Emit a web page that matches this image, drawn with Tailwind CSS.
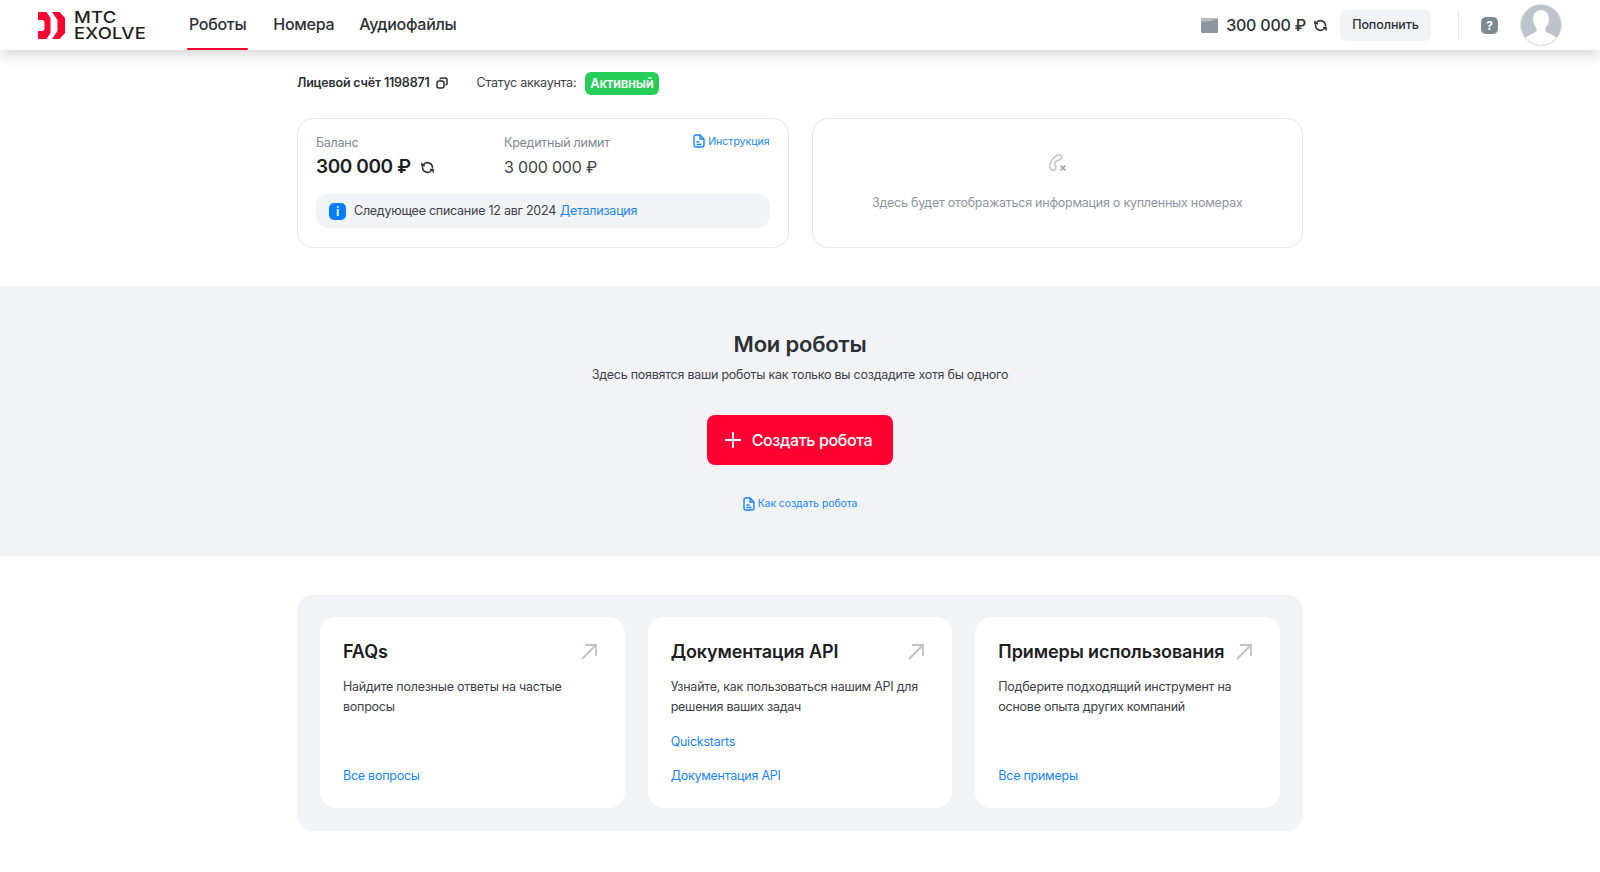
<!DOCTYPE html>
<html lang="ru">
<head>
  <meta charset="UTF-8" />
  <meta name="viewport" content="width=device-width, initial-scale=1.0" />
  <title>МТС Exolve</title>
  <script src="https://cdn.jsdelivr.net/npm/@tailwindcss/browser@4"></script>
</head>
<body class="bg-white h-[872px] overflow-hidden font-['Inter',sans-serif] text-[#1d2023]">
  <!-- header -->
  <header class="relative z-10 h-[50px] bg-white shadow-[0_3px_16px_rgba(0,0,0,0.2)] flex items-center pl-[38px] pr-[38px]">
    <div class="flex items-center w-[149px]">
      <svg width="27" height="27" viewBox="0 0 27 27" class="shrink-0"><path fill="#ff0032" d="M0 0H8.500L12.500 6V21L8.500 27H0V19H5L6.500 17V10L5 8H0z"/><path fill="#ff0032" d="M14 0H21.500L27 6V21L21.500 27H14L19.500 19V8z"/></svg>
      <div class="ml-[9px] text-[16px] leading-[16px] font-medium text-[#1d2023] tracking-[0.2px] scale-x-[1.15] origin-left">МТС<br />EXOLVE</div>
    </div>
    <nav class="flex h-full text-[16px] font-medium tracking-[-0.3px] text-[#2c3135]">
      <a class="relative flex items-center px-[2px] pb-[2px] mr-[25px]">Роботы<span class="absolute left-0 right-0 bottom-0 h-[2px] rounded bg-[#ff0032]"></span></a>
      <a class="flex items-center pb-[2px] mr-[25px]">Номера</a>
      <a class="flex items-center pb-[2px]">Аудиофайлы</a>
    </nav>
    <div class="ml-auto flex items-center">
      <svg width="17" height="15" viewBox="0 0 17 15"><rect width="17" height="15" rx="1.500" fill="#8d969f"/><path d="M0 4 Q8 4 17 0.500 V0 H0z" fill="#b5bcc3"/></svg>
      <span class="ml-[8px] text-[16px] font-medium tracking-[-0.2px] text-[#2c3135]">300 000 ₽</span>
      <svg class="ml-[7px]" width="15" height="15" viewBox="0 0 24 24" fill="none" stroke="#2c3135" stroke-width="2.400" stroke-linecap="round" stroke-linejoin="round"><path d="M20 12a8 8 0 0 0-14-5L4 9"/><path d="M4 12a8 8 0 0 0 14 5l2-2"/><path d="M3 5v4h4M21 19v-4h-4"/></svg>
      <button class="ml-[12px] w-[91px] h-[31px] rounded-md bg-[#f2f3f7] text-[12.500px] font-medium tracking-[-0.1px] text-[#2c3135]">Пополнить</button>
      <div class="ml-[27px] w-px h-[30px] bg-[#e4e6ea]"></div>
      <div class="ml-[22px] w-[17px] h-[17px] rounded-[5px] bg-[#7e8993] text-white text-[12px] font-bold leading-[17px] text-center">?</div>
      <div class="ml-[22px] w-[42px] h-[42px] rounded-full bg-[#bcc3ca] border border-[#e2e5e9] overflow-hidden">
        <svg width="40" height="40" viewBox="0 0 40 40"><path fill="#fff" d="M20 5c5 0 8 4 8 9.500 0 3.500-1.500 6.500-3.500 8.500v3c1 2 8 3.500 11 7-3.500 4-9.500 7-15.500 7S8 37.500 4.500 33c3-3.500 10-5 11-7v-3c-2-2-3.500-5-3.500-8.500C12 9 15 5 20 5z"/></svg>
      </div>
    </div>
  </header>

  <main>
    <!-- account -->
    <div class="w-[1006px] mx-auto">
      <div class="flex items-center h-[24px] mt-[21px]">
        <span class="text-[12.500px] font-semibold tracking-[-0.2px] text-[#2c3135]">Лицевой счёт 1198871</span>
        <svg class="ml-[6px]" width="12" height="12" viewBox="0 0 12 12" fill="none" stroke="#2c3135" stroke-width="1.500"><rect x="1" y="4" width="7" height="7" rx="2"/><path d="M4 2.500A1.500 1.500 0 0 1 5.500 1H9.500A1.500 1.500 0 0 1 11 2.500V6.500A1.500 1.500 0 0 1 9.500 8"/></svg>
        <span class="ml-[29px] text-[12.500px] tracking-[-0.25px] text-[#3c4247]">Статус аккаунта:</span>
        <span class="ml-[9px] h-[23px] px-[5px] rounded-md bg-[#26cd58] text-white text-[13px] font-semibold tracking-[-0.2px] leading-[23px]">Активный</span>
      </div>
      <div class="mt-[23px] grid grid-cols-2 gap-[23px]">
        <section class="relative h-[130px] rounded-[16px] border border-[#e6e8ec] px-[18px] pt-[14px]">
          <div class="flex">
            <div class="w-[188px]">
              <div class="text-[12.500px] tracking-[-0.25px] leading-[19px] text-[#7e8993]">Баланс</div>
              <div class="mt-[1px] flex items-center">
                <span class="text-[19px] tracking-[-0.4px] leading-[28px] font-semibold text-[#1d2023]">300 000 ₽</span>
                <svg class="ml-[9px]" width="15" height="15" viewBox="0 0 24 24" fill="none" stroke="#2c3135" stroke-width="2.400" stroke-linecap="round" stroke-linejoin="round"><path d="M20 12a8 8 0 0 0-14-5L4 9"/><path d="M4 12a8 8 0 0 0 14 5l2-2"/><path d="M3 5v4h4M21 19v-4h-4"/></svg>
              </div>
            </div>
            <div>
              <div class="text-[12.500px] tracking-[-0.25px] leading-[19px] text-[#7e8993]">Кредитный лимит</div>
              <div class="mt-[1px] text-[16px] tracking-[-0.2px] leading-[28px] text-[#3c4247]">3 000 000 ₽</div>
            </div>
            <a class="ml-auto flex items-start h-[19px] text-[10.500px] leading-[17px] text-[#1a85f5]">
              <svg class="mr-[3px] mt-[1px]" width="12" height="14" viewBox="0 0 12 14" fill="none" stroke="#1a85f5" stroke-width="1.400"><path d="M3 1h4l4 4v6a2 2 0 0 1-2 2H3a2 2 0 0 1-2-2V3a2 2 0 0 1 2-2z"/><path d="M7 1v4h4M3.500 8h3M3.500 10.500h5"/></svg>
              Инструкция
            </a>
          </div>
          <div class="mt-[13px] h-[34px] rounded-[12px] bg-[#f2f3f7] flex items-center pl-[13px] text-[12.500px] tracking-[-0.25px] text-[#3c4247]">
            <span class="w-[17px] h-[17px] rounded-[5px] bg-[#007cff] text-white text-[12px] font-bold leading-[17px] text-center">i</span>
            <span class="ml-[8px]">Следующее списание 12 авг 2024</span>
            <a class="ml-[4px] text-[#1a85f5]">Детализация</a>
          </div>
        </section>
        <section class="h-[130px] rounded-[16px] border border-[#e6e8ec] flex flex-col items-center pt-[34px]">
          <svg width="19" height="19" viewBox="0 0 19 19" fill="none" stroke="#bcc3ca" stroke-width="1.500" stroke-linejoin="round"><path d="M5 17.500C1.500 16 1 12 3 8.500 5 5 8 2 11 2c2 0 3 1.500 3 3L11.500 7C9 6.500 6.500 9.500 6.500 12L8 13.500c0 2-1.500 4.500-3 4z"/><path d="M12.500 12.500l5 5M17.500 12.500l-5 5" stroke="#9aa3ad" stroke-width="1.700"/></svg>
          <p class="mt-[22px] text-[12.500px] tracking-[-0.25px] text-[#8d969f]">Здесь будет отображаться информация о купленных номерах</p>
        </section>
      </div>
    </div>

    <!-- robots -->
    <section class="mt-[38px] h-[270px] bg-[#f2f3f7] flex flex-col items-center pt-[42px]">
      <h1 class="text-[22px] tracking-[-0.2px] leading-[32px] font-semibold text-[#2c3135]">Мои роботы</h1>
      <p class="mt-[5px] text-[12.500px] tracking-[-0.25px] leading-[20px] text-[#3c4247]">Здесь появятся ваши роботы как только вы создадите хотя бы одного</p>
      <button class="mt-[30px] w-[186px] h-[50px] rounded-lg bg-[#ff0032] text-white text-[16px] tracking-[-0.35px] font-medium flex items-center justify-center pr-[2px]">
        <svg class="mr-[11px] -ml-[1px]" width="16" height="16" viewBox="0 0 16 16" stroke="#fff" stroke-width="1.800"><path d="M8 0v16M0 8h16"/></svg>
        Создать робота
      </button>
      <a class="mt-[30px] flex items-center text-[10.500px] tracking-[-0.1px] leading-[18px] text-[#1a85f5]">
        <svg class="mr-[3px]" width="12" height="14" viewBox="0 0 12 14" fill="none" stroke="#1a85f5" stroke-width="1.400"><path d="M3 1h4l4 4v6a2 2 0 0 1-2 2H3a2 2 0 0 1-2-2V3a2 2 0 0 1 2-2z"/><path d="M7 1v4h4M3.500 8h3M3.500 10.500h5"/></svg>
        Как создать робота
      </a>
    </section>

    <!-- links -->
    <section class="mt-[39px] w-[1006px] mx-auto rounded-[16px] bg-[#f2f3f7] px-[23px] pt-[22px] pb-[23px] grid grid-cols-3 gap-[23px]">
      <article class="h-[191px] rounded-[16px] bg-white px-[23px] pt-[23px] flex flex-col">
        <div class="flex items-center justify-between pr-[5px]">
          <h2 class="text-[18px] tracking-[-0.1px] leading-[24px] font-semibold text-[#1d2023]">FAQs</h2>
          <svg width="16" height="16" viewBox="0 0 16 16" fill="none" stroke="#bcc3ca" stroke-width="1.800"><path d="M1 15L15 1M4 1h11v11"/></svg>
        </div>
        <p class="mt-[13px] text-[12.500px] tracking-[-0.25px] leading-[19.500px] text-[#3c4247]">Найдите полезные ответы на частые вопросы</p>
        <a class="mt-auto mb-[23px] text-[12.500px] tracking-[-0.25px] leading-[19px] text-[#1a85f5]">Все вопросы</a>
      </article>
      <article class="h-[191px] rounded-[16px] bg-white px-[23px] pt-[23px] flex flex-col">
        <div class="flex items-center justify-between pr-[5px]">
          <h2 class="text-[18px] tracking-[-0.1px] leading-[24px] font-semibold text-[#1d2023]">Документация API</h2>
          <svg width="16" height="16" viewBox="0 0 16 16" fill="none" stroke="#bcc3ca" stroke-width="1.800"><path d="M1 15L15 1M4 1h11v11"/></svg>
        </div>
        <p class="mt-[13px] text-[12.500px] tracking-[-0.25px] leading-[19.500px] text-[#3c4247]">Узнайте, как пользоваться нашим API для решения ваших задач</p>
        <a class="mt-auto text-[12.500px] tracking-[-0.25px] leading-[19px] text-[#1a85f5]">Quickstarts</a>
        <a class="mt-[15px] mb-[23px] text-[12.500px] tracking-[-0.25px] leading-[19px] text-[#1a85f5]">Документация API</a>
      </article>
      <article class="h-[191px] rounded-[16px] bg-white px-[23px] pt-[23px] flex flex-col">
        <div class="flex items-center justify-between pr-[5px]">
          <h2 class="text-[18px] tracking-[-0.1px] leading-[24px] font-semibold text-[#1d2023]">Примеры использования</h2>
          <svg width="16" height="16" viewBox="0 0 16 16" fill="none" stroke="#bcc3ca" stroke-width="1.800"><path d="M1 15L15 1M4 1h11v11"/></svg>
        </div>
        <p class="mt-[13px] text-[12.500px] tracking-[-0.25px] leading-[19.500px] text-[#3c4247]">Подберите подходящий инструмент на основе опыта других компаний</p>
        <a class="mt-auto mb-[23px] text-[12.500px] tracking-[-0.25px] leading-[19px] text-[#1a85f5]">Все примеры</a>
      </article>
    </section>
  </main>
</body>
</html>
